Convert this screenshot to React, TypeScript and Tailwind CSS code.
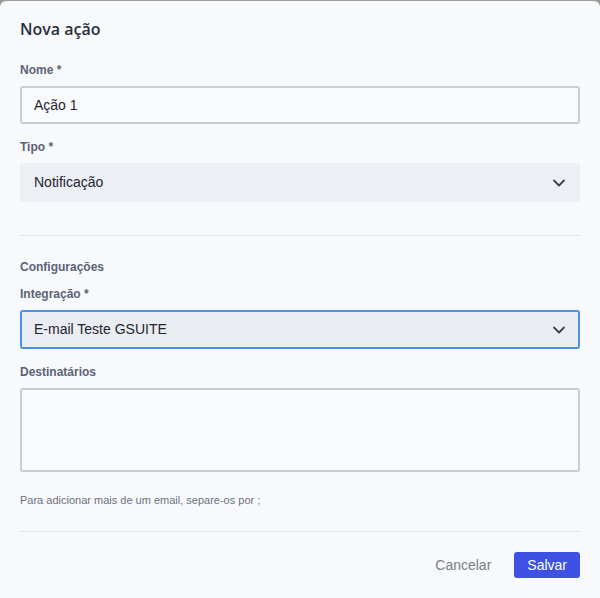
import React from "react";

const labelCls =
  "block text-[12px] leading-4 font-bold text-[#5b6377] font-['Liberation_Sans',Arial,sans-serif]";

const Chevron = () => (
  <svg width="16" height="16" viewBox="0 0 16 16" fill="none" className="text-[#3a3f4a]">
    <path d="M3 5.5l5 5 5-5" stroke="currentColor" strokeWidth="1.8" strokeLinecap="round" strokeLinejoin="round" />
  </svg>
);

interface SelectProps {
  value: string;
  focused?: boolean;
}

const SelectBox: React.FC<SelectProps> = ({ value, focused }) => (
  <div
    className={
      focused
        ? "flex items-center justify-between h-[39px] pl-[12px] pr-[11px] rounded-[3px] bg-[#e9ecf1] border-2 border-[#4b91e8]"
        : "flex items-center justify-between h-[39px] pl-[14px] pr-[13px] rounded-[2px] bg-[#eceff4]"
    }
  >
    <span className="text-[14px] text-[#1f2430]">{value}</span>
    <Chevron />
  </div>
);

export default function App() {
  return (
    <div className="w-[600px] h-[598px] bg-[#9b9b9b] pt-px font-['Liberation_Sans',Arial,sans-serif]">
      <div className="h-[597px] bg-[#f8f9fb] rounded-t-[6px] px-5 pt-[18px]">
        {/* cabeçalho */}
        <h2 className="text-[16px] leading-[20px] font-semibold text-[#2b303b] font-['Open_Sans',sans-serif]">
          Nova ação
        </h2>

        {/* nome */}
        <label className={labelCls + " mt-[23px]"}>Nome *</label>
        <div className="mt-[8px] h-[38px] flex items-center px-[12px] bg-[#f9fafb] border-2 border-[#c9cdd3] rounded-[3px] text-[14px] text-[#1f2430]">
          Ação 1
        </div>

        {/* tipo */}
        <label className={labelCls + " mt-[15px]"}>Tipo *</label>
        <div className="mt-[8px]">
          <SelectBox value="Notificação" />
        </div>

        <div className="mt-[33px] h-px bg-[#e1e4e9]" />

        {/* configurações */}
        <div className={labelCls + " mt-[23px]"}>Configurações</div>
        <label className={labelCls + " mt-[11px]"}>Integração *</label>
        <div className="mt-[8px]">
          <SelectBox value="E-mail Teste GSUITE" focused />
        </div>

        <label className={labelCls + " mt-[15px]"}>Destinatários</label>
        <div className="mt-[8px] h-[84px] bg-[#f9fafb] border-2 border-[#c9cdd3] rounded-[3px]" />

        <p className="mt-[21px] text-[11px] leading-[14px] text-[#6b7280]">
          Para adicionar mais de um email, separe-os por ;
        </p>

        <div className="mt-[24px] h-px bg-[#e1e4e9]" />

        {/* rodapé */}
        <div className="mt-[20px] flex items-center justify-end gap-[23px]">
          <button className="text-[14px] text-[#7a7f88]">Cancelar</button>
          <button className="h-[26px] px-[13px] rounded-[3px] bg-[#3d52e3] text-[14px] text-white">
            Salvar
          </button>
        </div>
      </div>
    </div>
  );
}
